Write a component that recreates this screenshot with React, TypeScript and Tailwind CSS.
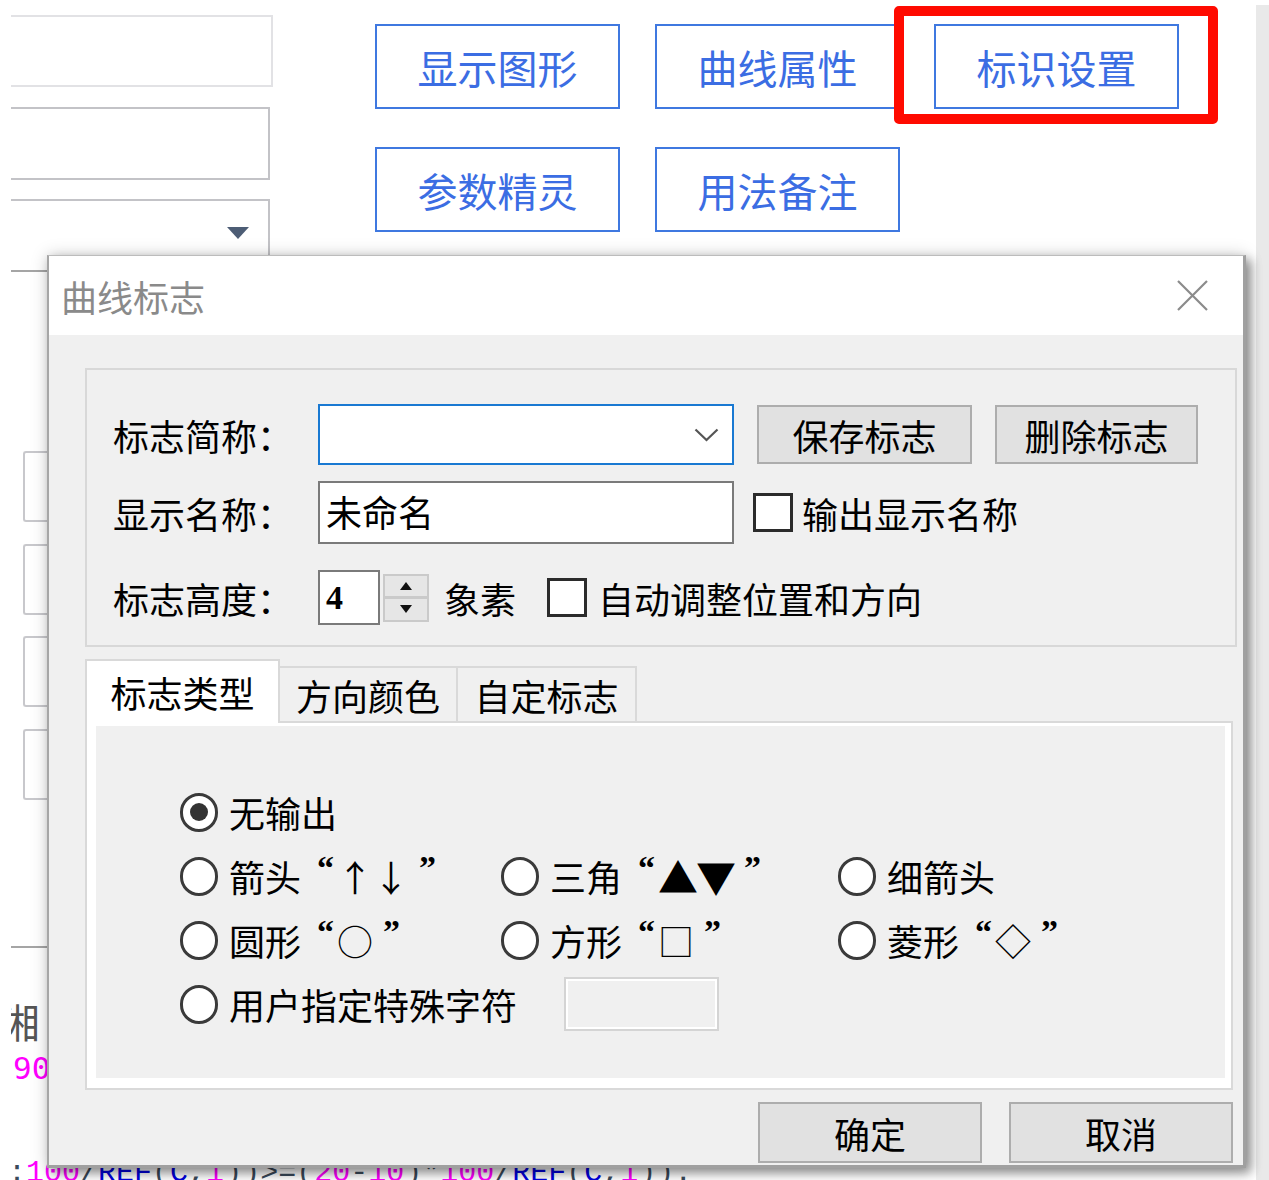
import React from 'react';

function Radio({ checked = false }: { checked?: boolean }) {
  return (
    <span className="w-[38px] h-[39px] shrink-0 rounded-full border-[3px] border-[#3a3a3a] bg-white flex items-center justify-center">
      {checked && <span className="w-[18px] h-[18px] rounded-full bg-[#333]" />}
    </span>
  );
}

function Check({ className = '' }: { className?: string }) {
  return <div className={'w-[40px] h-[39px] shrink-0 border-[3px] border-[#2b2b2b] bg-white ' + className} />;
}

function BlueButton({ label }: { label: string }) {
  return (
    <div className="w-[245px] h-[85px] border-2 border-[#3f78e0] bg-white flex items-center justify-center text-[40px] leading-none text-[#3b6de3]">
      {label}
    </div>
  );
}

function Option({ children, checked }: { children: React.ReactNode; checked?: boolean }) {
  return (
    <div className="flex items-center h-[40px]">
      <Radio checked={checked} />
      <span className="ml-[11px] flex items-center text-[36px] leading-none">{children}</span>
    </div>
  );
}

const openQ = <span className="w-[36px] text-right pr-[3px] font-['Liberation_Serif'] font-bold text-[34px] -translate-y-[8px]">“</span>;
const closeQ = <span className="w-[36px] text-left pl-[10px] font-['Liberation_Serif'] font-bold text-[34px] -translate-y-[8px]">”</span>;

export default function App() {
  return (
    <div className="relative w-[1269px] h-[1180px] overflow-hidden bg-white flex font-['Noto_Sans_CJK_SC',sans-serif] text-black">
      {/* page behind the dialog */}
      <div className="flex-1 flex flex-col">
        <div className="h-[255px] flex pl-[11px] shrink-0">
          <div className="w-[262px] flex flex-col">
            <div className="mt-[15px] h-[72px] border-y-2 border-r-2 border-[#e2e2e5]" />
            <div className="mt-[20px] w-[259px] h-[73px] border-y-2 border-r-2 border-[#c3c3c7]" />
            <div className="mt-[19px] w-[259px] flex-1 border-t-2 border-r-2 border-[#c3c3c7] flex justify-end pr-[19px] pt-[26px]">
              <svg width="22" height="12" viewBox="0 0 22 12">
                <polygon points="0,0 22,0 11,12" fill="#4d5d75" />
              </svg>
            </div>
          </div>
          <div className="ml-[102px] pt-[24px] grid grid-cols-[245px_244px_246px] gap-x-[35px] gap-y-[38px] content-start">
            <BlueButton label="显示图形" />
            <BlueButton label="曲线属性" />
            <BlueButton label="标识设置" />
            <BlueButton label="参数精灵" />
            <BlueButton label="用法备注" />
          </div>
        </div>

        <div className="flex-1 flex flex-col pl-[11px]">
          <div className="w-[38px] overflow-hidden flex flex-col">
            <div className="mt-[15px] h-[2px] bg-[#a5a5a5]" />
            <div className="mt-[179px] ml-[12px] h-[71px] border-y-2 border-l-2 border-[#c8c8cc] rounded-l-[3px]" />
            <div className="mt-[22px] ml-[12px] h-[71px] border-y-2 border-l-2 border-[#c8c8cc] rounded-l-[3px]" />
            <div className="mt-[21px] ml-[12px] h-[71px] border-y-2 border-l-2 border-[#c8c8cc] rounded-l-[3px]" />
            <div className="mt-[22px] ml-[12px] h-[71px] border-y-2 border-l-2 border-[#c8c8cc] rounded-l-[3px]" />
            <div className="mt-[146px] h-[2px] bg-[#a5a5a5]" />
            <div className="mt-[53px] -ml-[11px] text-[40px] leading-none text-[#555] whitespace-nowrap">湘</div>
            <div className="mt-[12px] ml-[2px] font-['DejaVu_Sans_Mono',monospace] text-[31px] leading-none text-[#ff00ff]">90</div>
          </div>
          <div className="mt-auto -ml-[3px] h-[22px] whitespace-nowrap font-['Liberation_Mono',monospace] text-[30px] leading-none">
            <span className="text-[#3a4a5a]">:</span>
            <span className="text-[#ff00ff]">100</span>
            <span className="text-[#3a4a5a]">/</span>
            <span className="text-[#0000e0]">REF</span>
            <span className="text-[#3a4a5a]">(</span>
            <span className="text-[#0000e0]">C</span>
            <span className="text-[#3a4a5a]">,</span>
            <span className="text-[#ff00ff]">1</span>
            <span className="text-[#3a4a5a]">))&gt;=(</span>
            <span className="text-[#ff00ff]">20</span>
            <span className="text-[#3a4a5a]">-</span>
            <span className="text-[#ff00ff]">10</span>
            <span className="text-[#3a4a5a]">)*</span>
            <span className="text-[#ff00ff]">100</span>
            <span className="text-[#3a4a5a]">/</span>
            <span className="text-[#0000e0]">REF</span>
            <span className="text-[#3a4a5a]">(</span>
            <span className="text-[#0000e0]">C</span>
            <span className="text-[#3a4a5a]">,</span>
            <span className="text-[#ff00ff]">1</span>
            <span className="text-[#3a4a5a]">)).</span>
          </div>
        </div>
      </div>
      <div className="w-[13px] mt-[5px] bg-[#e9e9e9]" />

      {/* highlight annotation */}
      <div className="absolute left-[894px] top-[6px] w-[324px] h-[118px] border-[10px] border-[#ff0a00] rounded-[5px]" />

      {/* dialog */}
      <div className="absolute left-[47px] top-[255px] w-[1199px] h-[913px] flex flex-col bg-[#f0f0f0] border-t border-l-2 border-r-[3px] border-b-[3px] border-t-[#bcbcbc] border-l-[#a6a6a6] border-r-[#a0a0a0] border-b-[#a0a0a0] shadow-[5px_5px_10px_rgba(0,0,0,0.4),0_0_16px_rgba(0,0,0,0.18)]">
        <div className="h-[79px] shrink-0 bg-white flex items-center justify-between pl-[12px] pr-[35px]">
          <span className="text-[36px] leading-none text-[#8a8a8a]">曲线标志</span>
          <svg width="31" height="31" viewBox="0 0 31 31">
            <path d="M1 1 L30 30 M30 1 L1 30" stroke="#8b8b8b" strokeWidth="2.2" />
          </svg>
        </div>

        <div className="flex-1 flex flex-col pl-[36px] pt-[33px]">
          {/* group box */}
          <div className="w-[1152px] h-[279px] shrink-0 border-2 border-[#d8d8d8] flex flex-col pt-[34px] pl-[26px]">
            <div className="flex items-center h-[61px]">
              <span className="w-[205px] text-[36px] leading-none">标志简称：</span>
              <div className="w-[416px] h-[61px] border-2 border-[#1979d2] bg-white flex items-center justify-end pr-[13px]">
                <svg width="25" height="14" viewBox="0 0 25 14">
                  <path d="M1.5 1.5 L12.5 12 L23.5 1.5" stroke="#555" strokeWidth="2.2" fill="none" />
                </svg>
              </div>
              <div className="ml-[23px] w-[215px] h-[59px] bg-[#e1e1e1] border-2 border-[#adadad] flex items-center justify-center text-[36px] leading-none">保存标志</div>
              <div className="ml-[23px] w-[203px] h-[59px] bg-[#e1e1e1] border-2 border-[#adadad] flex items-center justify-center text-[36px] leading-none">删除标志</div>
            </div>

            <div className="mt-[16px] flex items-center h-[63px]">
              <span className="w-[205px] text-[36px] leading-none">显示名称：</span>
              <div className="w-[416px] h-[63px] border-2 border-[#7a7a7a] bg-white flex items-center pl-[6px] pb-[4px] text-[36px] leading-none">未命名</div>
              <Check className="ml-[19px]" />
              <span className="ml-[9px] text-[36px] leading-none">输出显示名称</span>
            </div>

            <div className="mt-[26px] flex items-center h-[55px]">
              <span className="w-[205px] text-[36px] leading-none">标志高度：</span>
              <div className="w-[62px] h-[55px] border-2 border-[#7a7a7a] bg-white flex items-center pl-[6px] font-['Liberation_Serif',serif] font-bold text-[34px] leading-none">4</div>
              <div className="ml-[3px] w-[46px] h-[48px] border-2 border-[#cacaca] bg-[#cacaca] flex flex-col gap-[3px]">
                <div className="flex-1 bg-[#e6e6e6] flex items-center justify-center">
                  <svg width="12" height="8" viewBox="0 0 12 8"><polygon points="6,0 12,8 0,8" fill="#111" /></svg>
                </div>
                <div className="flex-1 bg-[#e6e6e6] flex items-center justify-center">
                  <svg width="12" height="8" viewBox="0 0 12 8"><polygon points="0,0 12,0 6,8" fill="#111" /></svg>
                </div>
              </div>
              <span className="ml-[15px] text-[36px] leading-none">象素</span>
              <Check className="ml-[31px]" />
              <span className="ml-[11px] text-[36px] leading-none">自动调整位置和方向</span>
            </div>
          </div>

          {/* tabs */}
          <div className="mt-[12px] h-[62px] shrink-0 flex items-end">
            <div className="relative z-10 -mb-[2px] w-[195px] h-[64px] bg-white border-2 border-b-0 border-[#d9d9d9] flex items-center justify-center text-[36px] leading-none">标志类型</div>
            <div className="w-[178px] h-[55px] bg-[#f0f0f0] border-2 border-b-0 border-l-0 border-[#d9d9d9] flex items-center justify-center text-[36px] leading-none">方向颜色</div>
            <div className="w-[179px] h-[55px] bg-[#f0f0f0] border-2 border-b-0 border-l-0 border-[#d9d9d9] flex items-center justify-center text-[36px] leading-none">自定标志</div>
          </div>
          <div className="w-[1148px] h-[369px] shrink-0 border-2 border-[#d9d9d9] bg-white pt-[3px] pl-[9px] pr-[6px] pb-[10px]">
            <div className="h-full bg-[#f0f0f0] pt-[66px] pl-[84px] flex flex-col">
              <Option checked>无输出</Option>
              <div className="mt-[24px] grid grid-cols-[321px_337px_auto]">
                <Option>
                  箭头{openQ}
                  <span className="w-[36px] text-center">↑</span>
                  <span className="w-[36px] text-center">↓</span>
                  {closeQ}
                </Option>
                <Option>
                  三角{openQ}
                  <span className="w-[38px] text-center text-[40px]">▲</span>
                  <span className="w-[38px] text-center text-[40px]">▼</span>
                  {closeQ}
                </Option>
                <Option>细箭头</Option>
              </div>
              <div className="mt-[24px] grid grid-cols-[321px_337px_auto]">
                <Option>
                  圆形{openQ}
                  <span className="w-[36px] text-center">○</span>
                  {closeQ}
                </Option>
                <Option>
                  方形{openQ}
                  <span className="w-[36px] text-center">□</span>
                  {closeQ}
                </Option>
                <Option>
                  菱形{openQ}
                  <span className="w-[36px] text-center">◇</span>
                  {closeQ}
                </Option>
              </div>
              <div className="mt-[17px] flex items-center">
                <Option>用户指定特殊字符</Option>
                <div className="ml-[47px] w-[155px] h-[54px] border-2 border-[#d4d4d4] bg-[#f0f0f0] shadow-[inset_0_0_0_2px_#ffffff]" />
              </div>
            </div>
          </div>

          {/* bottom buttons */}
          <div className="mt-[12px] w-[1148px] flex justify-end gap-[27px]">
            <div className="w-[224px] h-[61px] bg-[#e1e1e1] border-2 border-[#adadad] flex items-center justify-center text-[36px] leading-none">确定</div>
            <div className="w-[224px] h-[61px] bg-[#e1e1e1] border-2 border-[#adadad] flex items-center justify-center text-[36px] leading-none">取消</div>
          </div>
        </div>
      </div>
    </div>
  );
}
